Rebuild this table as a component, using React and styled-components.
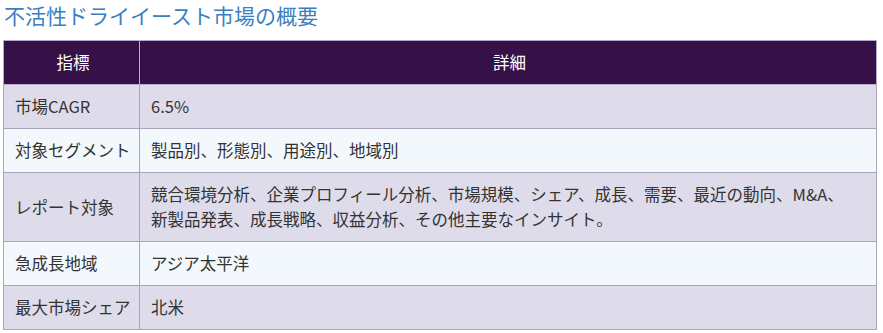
import React from 'react';
import styled, { createGlobalStyle } from 'styled-components';

const GlobalStyle = createGlobalStyle`
  body {
    margin: 0;
    background: #ffffff;
    font-family: "Noto Sans CJK JP", "Noto Sans", sans-serif;
  }
`;

const Wrapper = styled.div`
  padding: 0 6px 0 3px;
`;

const Title = styled.h3`
  margin: 0;
  padding: 0 0 0 1px;
  height: 40px;
  line-height: 30px;
  font-size: 21px;
  font-weight: 400;
  color: #3b7fc1;
`;

const Table = styled.table`
  width: 100%;
  border-collapse: collapse;
  border: 1px solid #a9a5bd;
  font-size: 16.5px;
  color: #333333;
`;

const HeadCell = styled.th`
  background: #361148;
  color: #ffffff;
  font-weight: 400;
  text-align: center;
  padding: 9px 8px 9px 11px;
  line-height: 25px;
  border: 1px solid #b9a8d0;
  width: ${(p) => p.width || 'auto'};
`;

const Row = styled.tr`
  background: ${(p) => (p.$alt ? '#f2f8fc' : '#dedcea')};
`;

const Cell = styled.td`
  padding: ${(p) => (p.$label ? '9px 7px 9px 11px' : '9px 26px 9px 11px')};
  line-height: 25px;
  border: 1px solid #a9a5bd;
  white-space: ${(p) => (p.$label ? 'nowrap' : 'normal')};
`;

const rows = [
  ['市場CAGR', '6.5%'],
  ['対象セグメント', '製品別、形態別、用途別、地域別'],
  ['レポート対象', '競合環境分析、企業プロフィール分析、市場規模、シェア、成長、需要、最近の動向、M&A、新製品発表、成長戦略、収益分析、その他主要なインサイト。'],
  ['急成長地域', 'アジア太平洋'],
  ['最大市場シェア', '北米'],
];

export default function App() {
  return (
    <>
      <GlobalStyle />
      <Wrapper>
        <Title>不活性ドライイースト市場の概要</Title>
        <Table>
          <thead>
            <tr>
              <HeadCell width="116px">指標</HeadCell>
              <HeadCell>詳細</HeadCell>
            </tr>
          </thead>
          <tbody>
            {rows.map(([label, value], i) => (
              <Row key={label} $alt={i % 2 === 1}>
                <Cell $label>{label}</Cell>
                <Cell>{value}</Cell>
              </Row>
            ))}
          </tbody>
        </Table>
      </Wrapper>
    </>
  );
}
